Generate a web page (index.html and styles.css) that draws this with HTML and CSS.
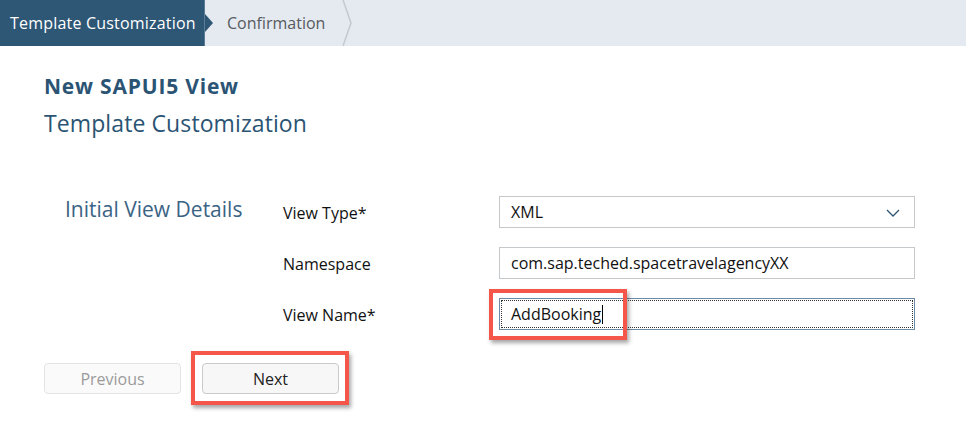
FILE: index.html
```html
<!DOCTYPE html>
<html>
<head>
<meta charset="utf-8">
<link rel="stylesheet" href="styles.css">
</head>
<body>
<div class="steps">
  <div class="step active">Template Customization<span class="tip"></span></div>
  <div class="step">Confirmation<svg class="sep" width="12" height="46" viewBox="0 0 12 46"><path d="M1 0 L9 23 L1 46" fill="none" stroke="#c4c9d0" stroke-width="1.5"/></svg></div>
</div>
<div class="content">
  <div class="title">New SAPUI5 View</div>
  <div class="subtitle">Template Customization</div>
  <div class="form">
    <div class="group">Initial View Details</div>
    <div class="rows">
      <div class="row">
        <div class="label">View Type*</div>
        <div class="field select">XML<svg class="chev" width="14" height="8" viewBox="0 0 14 8"><path d="M1 1 L7 7 L13 1" fill="none" stroke="#2b5474" stroke-width="1.3"/></svg></div>
      </div>
      <div class="row">
        <div class="label">Namespace</div>
        <div class="field">com.sap.teched.spacetravelagencyXX</div>
      </div>
      <div class="row">
        <div class="label">View Name*</div>
        <div class="field focus">AddBooking<span class="caret"></span><span class="hl hl-input"></span></div>
      </div>
    </div>
  </div>
  <div class="buttons">
    <button class="btn disabled">Previous</button>
    <div class="btn-wrap"><button class="btn next">Next</button><span class="hl hl-btn"></span></div>
  </div>
</div>
</body>
</html>
```
FILE: styles.css
```css
* { box-sizing: border-box; }
html, body { height: 100%; }
body {
  margin: 0;
  background: #fff;
  font-family: "Open Sans", "Liberation Sans", Arial, sans-serif;
  color: #000;
}
.steps {
  display: flex;
  height: 46px;
  background: #e5e9f0;
}
.step {
  position: relative;
  display: flex;
  align-items: center;
  font-size: 16px;
  color: #575b60;
  padding-left: 22px;
  width: 141px;
}
.step.active {
  background: #2e5675;
  color: #fff;
  padding-left: 10px;
  width: 205px;
  border-right: 1px solid #5b7a94;
  letter-spacing: 0.2px;
}
.tip {
  position: absolute;
  right: -9px;
  top: 14px;
  width: 0;
  height: 0;
  border-top: 9px solid transparent;
  border-bottom: 9px solid transparent;
  border-left: 8px solid #2e5675;
}
.sep {
  position: absolute;
  right: -8px;
  top: 0;
}
.content {
  padding: 27px 0 40px 44px;
}
.title {
  font-size: 21px;
  font-weight: bold;
  color: #2b5474;
  line-height: 26px;
  letter-spacing: 0.8px;
}
.subtitle {
  font-size: 23px;
  color: #2b5474;
  line-height: 30px;
  margin-top: 9px;
  letter-spacing: 0.1px;
}
.form {
  display: flex;
  margin-top: 58px;
}
.group {
  width: 239px;
  padding-left: 21px;
  font-size: 21px;
  color: #3b6384;
  line-height: 26px;
  padding-top: 0;
}
.rows {
  display: flex;
  flex-direction: column;
  gap: 19px;
}
.row {
  display: flex;
  align-items: center;
}
.label {
  width: 216px;
  font-size: 16px;
  color: #111;
  padding-top: 2px;
}
.field {
  position: relative;
  width: 416px;
  height: 32px;
  border: 1px solid #c6c9cc;
  display: flex;
  align-items: center;
  padding-left: 11px;
  font-size: 16px;
  color: #111;
  background: #fff;
}
.select .chev {
  position: absolute;
  right: 14px;
  top: 12px;
}
.field.focus {
  border: 1px solid #6e8aa6;
  outline: 1px dotted #333;
  outline-offset: -3px;
}
.caret {
  display: inline-block;
  width: 1px;
  height: 19px;
  background: #000;
  margin-left: 1px;
}
.hl {
  position: absolute;
  border: 4px solid #f4574a;
  box-shadow: 2px 3px 4px rgba(0,0,0,0.35);
  pointer-events: none;
}
.hl-input {
  left: -11px;
  top: -10px;
  width: 138px;
  height: 51px;
}
.buttons {
  display: flex;
  gap: 21px;
  margin-top: 33px;
}
.btn-wrap {
  position: relative;
  display: flex;
}
.btn {
  width: 137px;
  height: 31px;
  border: 1px solid #c8cacc;
  border-radius: 4px;
  background: #f7f7f7;
  font-family: "Open Sans", "Liberation Sans", Arial, sans-serif;
  font-size: 16px;
  color: #222;
  padding: 0;
}
.btn.disabled {
  color: #9a9a9a;
  border-color: #e2e3e4;
  background: #fafafa;
}
.hl-btn {
  left: -11px;
  top: -12px;
  width: 158px;
  height: 54px;
}
```
